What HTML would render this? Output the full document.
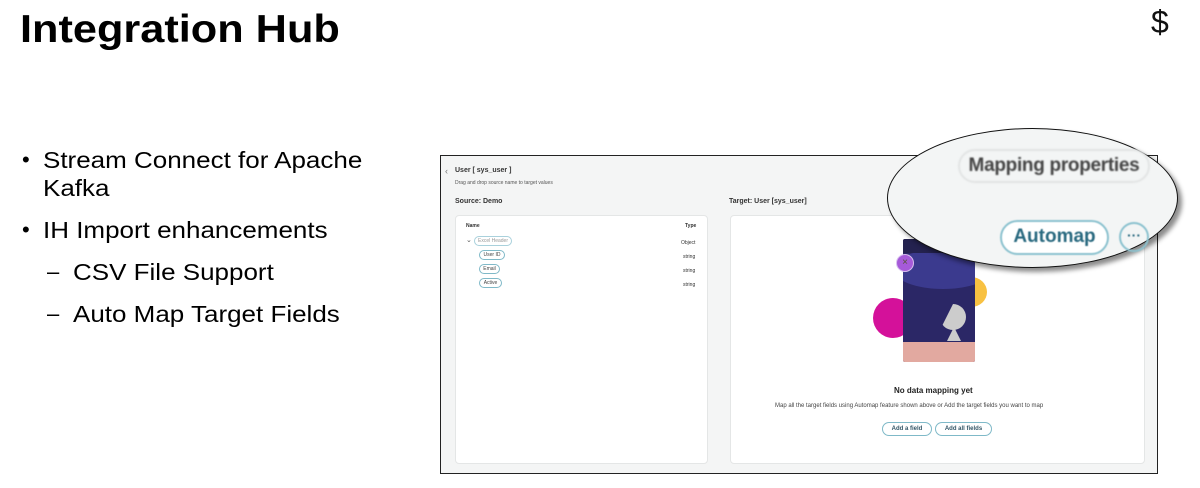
<!DOCTYPE html>
<html><head><style>
*{margin:0;padding:0;box-sizing:border-box}
body{width:1200px;height:488px;background:#fff;position:relative;overflow:hidden;font-family:"Liberation Sans",sans-serif;color:#000}
.a{position:absolute;white-space:nowrap}
.pill{position:absolute;border:1px solid #7fb9c8;border-radius:6px;font-size:5px;color:#444;text-align:center;line-height:8px;height:10px;background:#fff;white-space:nowrap;overflow:hidden}
.sm{font-size:6px;color:#333}
.b{position:absolute;white-space:nowrap;font-size:23px;line-height:28px;transform:scaleX(1.13);transform-origin:0 0}
</style></head><body>
<div class="a" style="left:20px;top:8px;font-size:39px;font-weight:bold;transform:scaleX(1.11);transform-origin:0 0">Integration Hub</div>
<div class="a" style="left:1151px;top:4px;font-size:32px;color:#111">$</div>

<div class="a" style="left:22px;top:146px;font-size:22px;line-height:28px">•</div>
<div class="b" style="left:43px;top:146px">Stream Connect for Apache<br>Kafka</div>
<div class="a" style="left:22px;top:216px;font-size:22px;line-height:28px">•</div>
<div class="b" style="left:43px;top:216px">IH Import enhancements</div>
<div class="a" style="left:47px;top:258px;font-size:22px;line-height:28px">–</div>
<div class="b" style="left:73px;top:258px">CSV File Support</div>
<div class="a" style="left:47px;top:300px;font-size:22px;line-height:28px">–</div>
<div class="b" style="left:73px;top:300px">Auto Map Target Fields</div>

<div class="a" style="left:440px;top:155px;width:718px;height:319px;border:1.5px solid #222;background:#f4f5f5"></div>
<div class="a" style="left:445px;top:166px;font-size:9px;color:#777">‹</div>
<div class="a" style="left:455px;top:167px;font-size:7px;font-weight:bold;color:#333">User [ sys_user ]</div>
<div class="a sm" style="left:455px;top:180px;font-size:5px;color:#555">Drag and drop source name to target values</div>
<div class="a" style="left:455px;top:198px;font-size:7px;font-weight:bold;color:#333">Source: Demo</div>
<div class="a" style="left:729px;top:198px;font-size:7px;font-weight:bold;color:#333">Target: User [sys_user]</div>

<div class="a" style="left:455px;top:215px;width:253px;height:249px;background:#fff;border:1px solid #e4e6e6;border-radius:4px"></div>
<div class="a" style="left:466px;top:223px;font-size:5px;font-weight:bold;color:#333">Name</div>
<div class="a" style="left:685px;top:223px;font-size:5px;font-weight:bold;color:#333">Type</div>
<div class="a" style="left:466px;top:236px;font-size:7px;color:#555">⌄</div>
<div class="pill" style="left:474px;top:236px;width:38px;border-color:#a9d1dc;color:#999">Excel Header</div>
<div class="pill" style="left:479px;top:250px;width:26px">User ID</div>
<div class="pill" style="left:479px;top:264px;width:21px">Email</div>
<div class="pill" style="left:479px;top:278px;width:23px">Active</div>
<div class="a sm" style="left:681px;top:240px;font-size:5px">Object</div>
<div class="a sm" style="left:683px;top:254px;font-size:5px">string</div>
<div class="a sm" style="left:683px;top:268px;font-size:5px">string</div>
<div class="a sm" style="left:683px;top:282px;font-size:5px">string</div>

<div class="a" style="left:730px;top:215px;width:415px;height:249px;background:#fff;border:1px solid #e4e6e6;border-radius:4px"></div>

<!-- illustration -->
<div class="a" style="left:873px;top:298px;width:40px;height:40px;border-radius:50%;background:#d4119a"></div>
<div class="a" style="left:955px;top:277px;width:32px;height:30px;border-radius:50%;background:#f8c142"></div>
<div class="a" style="left:903px;top:239px;width:72px;height:123px;background:#2b2766;border-radius:2px;overflow:hidden">
 <div style="position:absolute;left:-10px;top:10px;width:100px;height:40px;border-radius:50%;background:#3b3a8e"></div>
 <div style="position:absolute;left:0;top:0;width:72px;height:14px;background:#24224f"></div>
 <div style="position:absolute;left:0;top:103px;width:72px;height:20px;background:#e2a9a0"></div>
 <div style="position:absolute;left:37px;top:65px;width:26px;height:26px;border-radius:50%;background:#ccc;clip-path:polygon(50% 0,100% 0,100% 100%,0 100%)"></div>
 <div style="position:absolute;left:44px;top:88px;width:0;height:0;border-left:7px solid transparent;border-right:7px solid transparent;border-bottom:14px solid #ccc"></div>
</div>
<div class="a" style="left:896px;top:254px;width:18px;height:18px;border-radius:50%;background:#a65ad9;border:1.5px solid #d8bff0;color:#553;font-size:10px;text-align:center;line-height:15px">×</div>

<div class="a" style="left:894px;top:386px;font-size:8px;font-weight:bold;color:#222">No data mapping yet</div>
<div class="a" style="left:775px;top:403px;font-size:6px;color:#444">Map all the target fields using Automap feature shown above or Add the target fields you want to map</div>
<div class="pill" style="left:882px;top:422px;width:50px;height:14px;line-height:12px;font-size:6px;color:#356;font-weight:bold;border-radius:7px">Add a field</div>
<div class="pill" style="left:935px;top:422px;width:57px;height:14px;line-height:12px;font-size:6px;color:#356;font-weight:bold;border-radius:7px">Add all fields</div>

<!-- magnifier ellipse -->
<div class="a" style="left:887px;top:128px;width:291px;height:140px;border-radius:50%;background:#f3f5f5;border:1.5px solid #111;box-shadow:4px 4px 5px rgba(0,0,0,.45)"></div>
<div class="a" style="left:958px;top:149px;width:192px;height:34px;border:2px solid #e2e4e4;border-radius:17px;text-align:center;line-height:30px;font-size:19px;font-weight:bold;color:#444;filter:blur(.7px);letter-spacing:-0.3px">Mapping properties</div>
<div class="a" style="left:1000px;top:220px;width:109px;height:35px;border:2.5px solid #8cc2cf;border-radius:18px;text-align:center;line-height:30px;font-size:19px;font-weight:bold;color:#2a6a80;background:#fff;filter:blur(.6px)">Automap</div>
<div class="a" style="left:1119px;top:222px;width:30px;height:30px;border:2.5px solid #8cc2cf;border-radius:50%;text-align:center;line-height:22px;font-size:14px;font-weight:bold;color:#2f6d83;filter:blur(.5px)">···</div>
</body></html>
